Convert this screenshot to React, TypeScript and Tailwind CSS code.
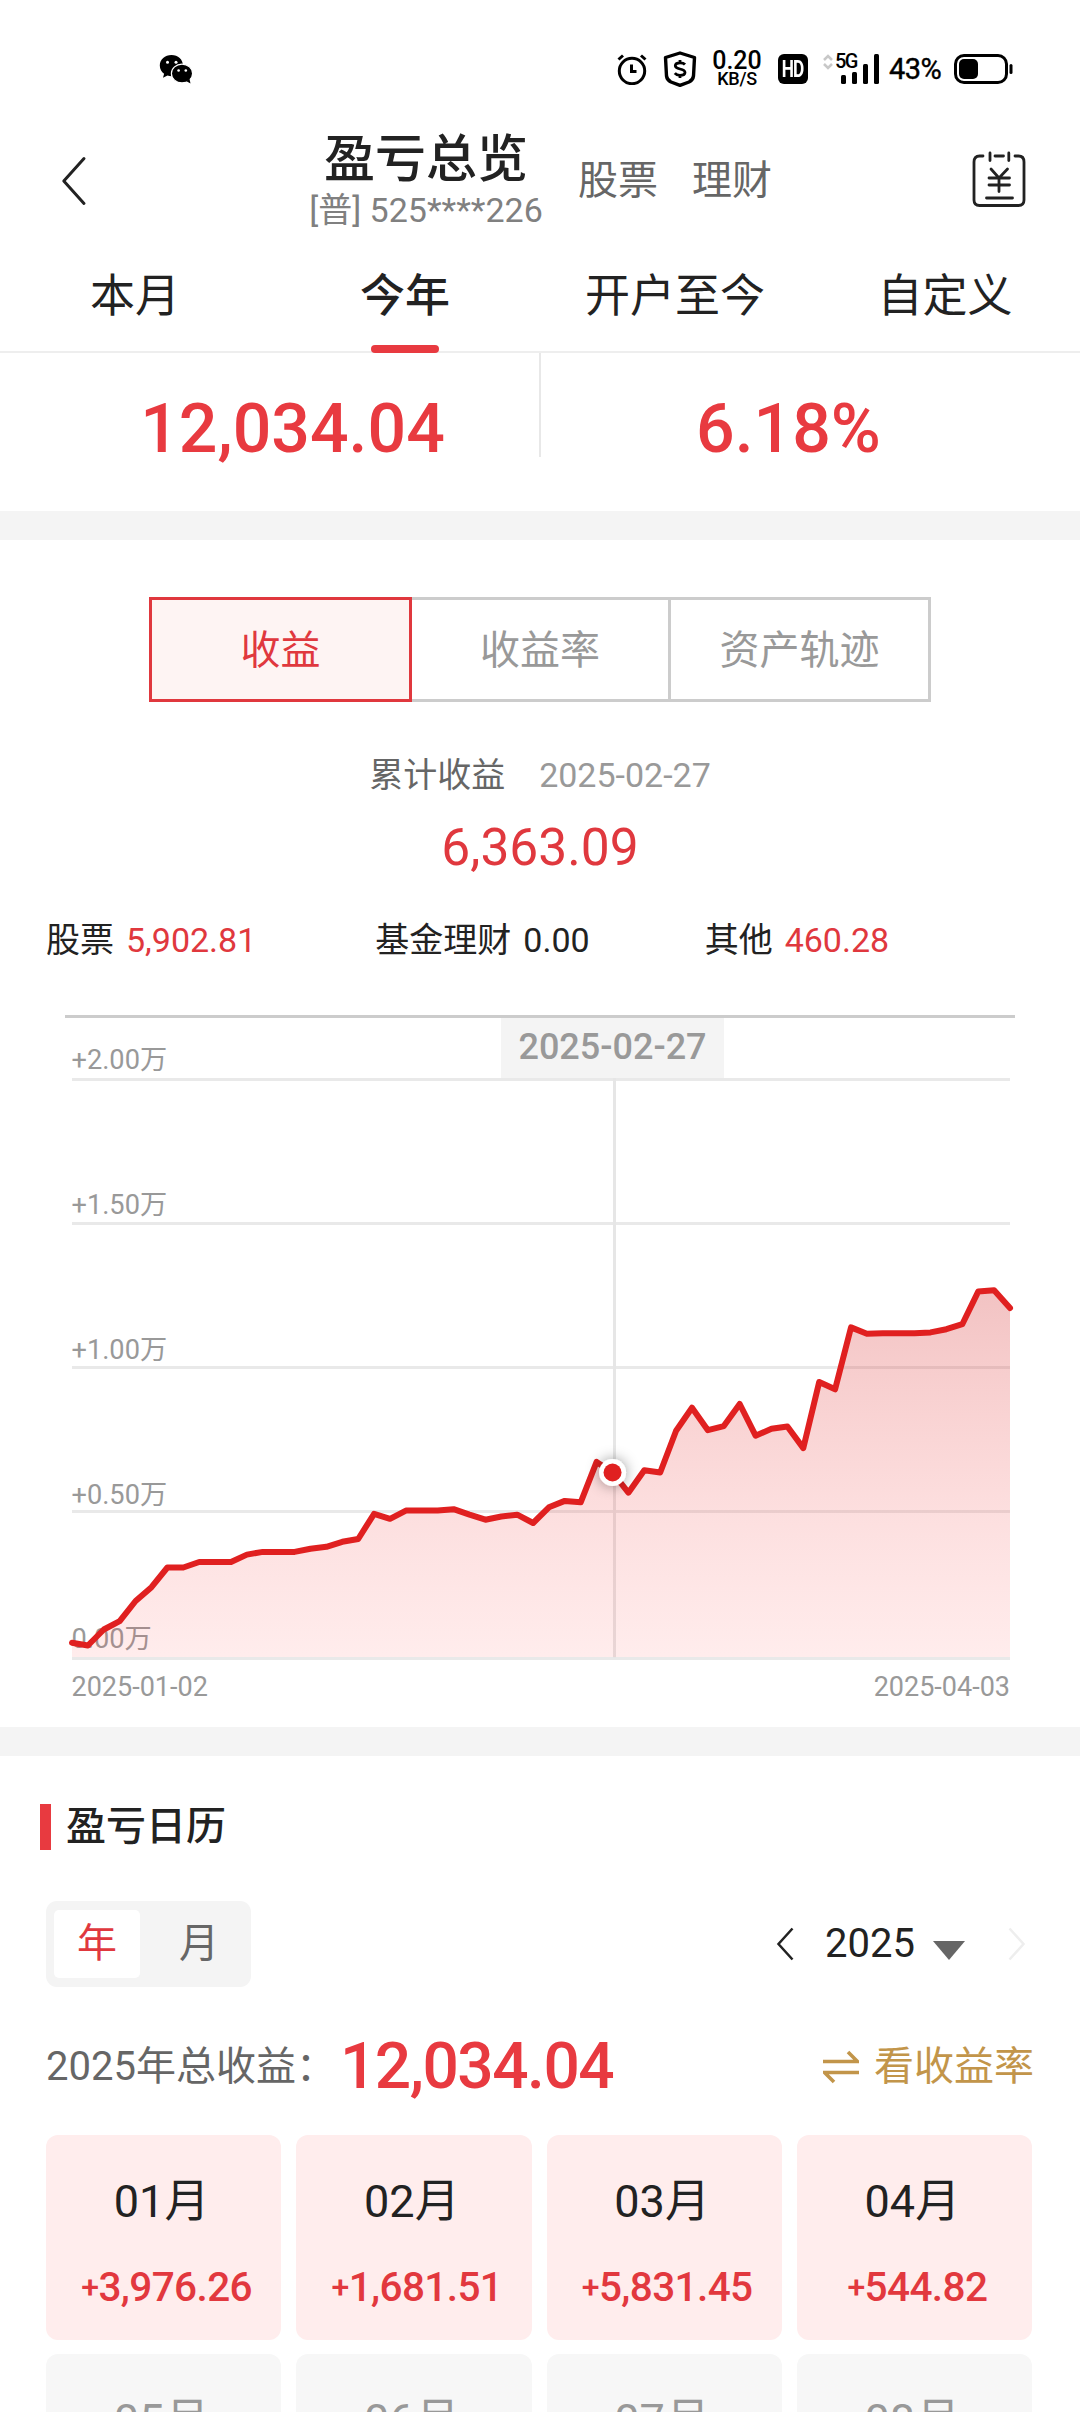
import clsx from "clsx"

const tabs = ["本月", "今年", "开户至今", "自定义"]

const segments = ["收益", "收益率", "资产轨迹"]

const breakdown = [
  { label: "股票", value: "5,902.81", up: true },
  { label: "基金理财", value: "0.00", up: false },
  { label: "其他", value: "460.28", up: true },
]

const months = [
  { name: "01月", value: "+3,976.26" },
  { name: "02月", value: "+1,681.51" },
  { name: "03月", value: "+5,831.45" },
  { name: "04月", value: "+544.82" },
  { name: "05月" },
  { name: "06月" },
  { name: "07月" },
  { name: "08月" },
]

const gridLines = [
  { y: 79.5, label: "+2.00万", labelY: 69 },
  { y: 223.5, label: "+1.50万", labelY: 214 },
  { y: 367.5, label: "+1.00万", labelY: 359 },
  { y: 511.5, label: "+0.50万", labelY: 504 },
  { y: 658.5, label: "0.00万", labelY: 648 },
]

const series = [
  642.8, 645.5, 629.5, 621.2, 601, 587.2, 567.5, 567.5, 562, 562, 562, 554.6, 551.9, 551.9, 551.9, 548.7, 546.8,
  541.8, 539, 513.8, 518.8, 510.6, 510.6, 510.6, 509.2, 514.7, 519.7, 516.5, 514.7, 523, 507.3, 500.9, 502.3, 461.9,
  472.5, 492.7, 470.2, 472.5, 430.7, 407.7, 430.2, 426.1, 404, 435.7, 428.8, 426.5, 448.1, 382, 389.3, 327.4, 333.8,
  333.3, 333.3, 333.3, 332.4, 329.2, 324.2, 291.6, 290.2, 308.1,
]

const CHART_LEFT = 72
const CHART_RIGHT = 1010
const SELECTED = 34

const pointX = (i: number) => CHART_LEFT + (i * (CHART_RIGHT - CHART_LEFT)) / (series.length - 1)
const points = series.map((y, i) => `${pointX(i).toFixed(1)},${y}`).join(" ")

function StatusBar() {
  return (
    <div className="flex h-[118px] items-center pt-5 text-black">
      <svg className="ml-[159px] h-[30px] w-[34px]" viewBox="0 0 34 30">
        <path d="M12.5 1C6 1 .8 5.500 .8 11.500c0 3.500 1.700 6.400 4.300 8.300L4 23.800l4.500-2.200c1.300.4 2.700.6 4 .6 6.500 0 11.500-4.600 11.500-10.600S19 1 12.500 1Z" />
        <ellipse cx="23" cy="19.500" rx="10.600" ry="9.400" stroke="#fff" strokeWidth="1.200" />
        <path d="m27 27 4.500 2.600-1-4.600Z" />
        <g fill="#fff">
          <circle cx="8.500" cy="8.200" r="1.500" />
          <circle cx="17" cy="8.200" r="1.500" />
          <circle cx="19.600" cy="16.500" r="1.300" />
          <circle cx="26.800" cy="16.500" r="1.300" />
        </g>
      </svg>

      <svg className="ml-[424px] h-8 w-[30px]" viewBox="0 0 30 32" fill="none" stroke="#000" strokeWidth="3">
        <circle cx="15" cy="18" r="12.700" />
        <path d="M14.500 11.500V18.500H19.500" />
        <path d="M1.500 6.500 6 2.500M28.500 6.500 24 2.500" />
      </svg>
      <svg className="ml-4 h-9 w-[34px]" viewBox="0 0 34 36" fill="none" stroke="#000" strokeWidth="3.400">
        <path d="M17 2 31.500 6.500 30.500 25Q30 29 26 31L17 34.300 8 31Q4 29 3.500 25L2.500 6.500Z" strokeLinejoin="round" />
        <path d="M22 13.500Q20.500 11.800 17 11.800 12.300 11.800 12.300 14.800 12.300 17 17 18 22 19 22 21.500 22 24.300 17 24.300 13.500 24.300 11.800 22.200M17 9V12M17 24V27" strokeWidth="2.800" />
      </svg>

      <div className="ml-[15px] flex w-[50px] flex-col items-center font-medium">
        <span className="text-[25px] leading-[19px]">0.20</span>
        <span className="text-[18px] leading-[18px] tracking-[-0.3px]">KB/S</span>
      </div>

      <div className="ml-4 flex h-[30px] w-[30px] items-center justify-center rounded-md bg-black text-white">
        <span className="scale-x-75 text-[23px] leading-none font-bold tracking-[-1px]">HD</span>
      </div>

      <div className="relative ml-[15px] h-[30px] w-[57px]">
        <svg className="h-[30px] w-[57px]" viewBox="0 0 57 30">
          <path d="M1 6 5 2 9 6M1 10 5 14 9 10" fill="none" stroke="#c8c8c8" strokeWidth="2.500" />
          <rect x="18" y="21" width="5" height="9" rx="1.500" />
          <rect x="29" y="18" width="5" height="12" rx="1.500" />
          <rect x="40" y="10" width="5" height="20" rx="1.500" />
          <rect x="51" y="0" width="5" height="30" rx="1.500" />
        </svg>
        <span className="absolute top-[-3px] left-[12px] text-[20px] leading-[20px] font-medium tracking-[-1.5px]">5G</span>
      </div>

      <span className="ml-[9px] w-[57px] text-[29px] leading-none tracking-[-0.5px] [-webkit-text-stroke:0.4px_#000]">43%</span>

      <svg className="ml-2 h-[30px] w-[60px]" viewBox="0 0 60 30">
        <rect x="1.500" y="1.500" width="51" height="27" rx="8.500" fill="none" stroke="#000" strokeWidth="3" />
        <rect x="5" y="5" width="19" height="20" rx="5" />
        <rect x="55.500" y="10" width="3" height="10" rx="1.500" />
      </svg>
    </div>
  )
}

function NavBar() {
  return (
    <div className="flex h-[125px] items-center">
      <svg className="ml-[61px] h-[50px] w-[26px]" viewBox="0 0 26 50" fill="none" stroke="#222" strokeWidth="3">
        <path d="M23 2.500 2.800 25 23 47.500" strokeLinecap="round" strokeLinejoin="round" />
      </svg>
      <div className="ml-[221px] flex w-[236px] flex-col items-center whitespace-nowrap">
        <h1 className="h-[58px] text-[51px] leading-[61px] font-medium text-[#222]">盈亏总览</h1>
        <span className="text-[34px] leading-[46px] text-[#808080]">[普] 525****226</span>
      </div>
      <span className="ml-[34px] text-[40px] leading-none text-[#666]">股票</span>
      <span className="ml-[34px] text-[40px] leading-none text-[#666]">理财</span>
      <svg className="mb-[3px] ml-[199px] h-[58px] w-[56px]" viewBox="0 0 56 58" fill="none" stroke="#222" strokeWidth="2.800" strokeLinecap="round">
        <path d="M12 6H8.500Q3 6 3 12V50Q3 55.500 8.500 55.500H47.500Q53 55.500 53 50V12Q53 6 47.500 6H44M24 6H32.500M19 3V10.500M37.800 3V10.500" />
        <path d="M20 19 28 28 36.500 19M18 28H38.500M18 35H38.500M28 28V41.500M15.500 48H41.500" />
      </svg>
    </div>
  )
}

function TabBar() {
  return (
    <div className="grid h-[110px] grid-cols-4 border-b-2 border-[#eee]">
      {tabs.map((tab, i) => (
        <div key={tab} className="-mb-0.5 flex flex-col items-center">
          <span className={clsx("h-[102px] text-[45px] leading-[107px] text-[#222]", i === 1 && "font-medium")}>{tab}</span>
          {i === 1 && <i className="z-10 h-2 w-[68px] rounded-full bg-[#e83a40]" />}
        </div>
      ))}
    </div>
  )
}

function ProfitChart() {
  return (
    <svg className="block h-[727px] w-full" viewBox="0 0 1080 727">
      <defs>
        <linearGradient id="area" gradientUnits="userSpaceOnUse" x1="0" y1="290" x2="0" y2="658">
          <stop offset="0" stopColor="#cf2020" stopOpacity="0.270" />
          <stop offset="0.600" stopColor="#f03434" stopOpacity="0.160" />
          <stop offset="1" stopColor="#ff4444" stopOpacity="0.100" />
        </linearGradient>
        <filter id="glow" x="-100%" y="-100%" width="300%" height="300%">
          <feDropShadow dx="0" dy="0" stdDeviation="7" floodColor="#000" floodOpacity="0.400" />
        </filter>
      </defs>

      <path d="M65 16.500H1015" stroke="#ccc" strokeWidth="3" />
      {gridLines.map((line) => (
        <g key={line.label}>
          <path d={`M${CHART_LEFT} ${line.y}H${CHART_RIGHT}`} stroke="#e9e9e9" strokeWidth="3" />
          <text x="71.500" y={line.labelY} fontSize="27.200" fill="#999">
            {line.label}
          </text>
        </g>
      ))}
      <path d="M614.500 78V658" stroke="#e6e6e6" strokeWidth="3" />

      <rect x="501" y="18" width="223" height="60" fill="#f4f4f4" />
      <text x="612.500" y="59" fontSize="36" fontWeight="500" fill="#999" textAnchor="middle">
        2025-02-27
      </text>

      <polygon points={`${CHART_LEFT},657 ${points} ${CHART_RIGHT},657`} fill="url(#area)" />
      <polyline points={points} fill="none" stroke="#e02020" strokeWidth="6" strokeLinecap="round" strokeLinejoin="round" />
      <circle cx={pointX(SELECTED)} cy={series[SELECTED]} r="13.500" fill="#fff" filter="url(#glow)" />
      <circle cx={pointX(SELECTED)} cy={series[SELECTED]} r="9" fill="#e02020" />

      <g fontSize="27" fill="#999">
        <text x="71.500" y="696">2025-01-02</text>
        <text x="1010" y="696" textAnchor="end">
          2025-04-03
        </text>
      </g>
    </svg>
  )
}

function MonthCard({ name, value }: { name: string; value?: string }) {
  return (
    <div className={clsx("flex h-[205px] flex-col items-center rounded-xl pt-10", value ? "bg-[#ffeded]" : "bg-[#f7f7f7]")}>
      <span className={clsx("-ml-1 text-[45px] leading-[54px]", value ? "text-[#222]" : "text-[#999]")}>{name}</span>
      {value && (
        <span className="mt-[31px] ml-[6px] flex items-center text-[40.5px] leading-[54px] font-medium tracking-[-0.6px] text-[#e2383e]">
          <span className="text-[32px]">{value[0]}</span>
          {value.slice(1)}
        </span>
      )}
    </div>
  )
}

export default function App() {
  return (
    <div className="h-[2412px] w-[1080px] overflow-hidden bg-white font-[Roboto,'Noto_Sans_CJK_SC',sans-serif] text-[#222]">
      <StatusBar />
      <NavBar />
      <TabBar />

      <div className="flex h-[158px] text-[68px] leading-[152px] font-medium text-[#e83a40]">
        <div className="h-[104px] w-[541px] border-r-2 border-[#e8e8e8] pl-[46px] text-center">12,034.04</div>
        <div className="h-[104px] w-[539px] pr-[44px] text-center">6.18%</div>
      </div>

      <div className="h-[29px] bg-[#f4f4f4]" />

      <div className="h-[460px] pt-[57px]">
        <div className="mx-auto flex h-[105px] w-[782px] text-[40px] leading-[101px]">
          {segments.map((label, i) => (
            <div
              key={label}
              className={clsx(
                "border-y-3 text-center",
                i === 0 ? "w-[263px] border-x-3 border-[#e0383e] bg-[#fef4f3] text-[#e0383e]" : "border-r-3 border-[#ccc] text-[#999]",
                i === 1 && "w-[259px]",
                i === 2 && "w-[260px]",
              )}
            >
              {label}
            </div>
          ))}
        </div>

        <div className="mt-[48px] flex justify-center gap-[34px] text-[34px] leading-[50px]">
          <span className="text-[#666]">累计收益</span>
          <span className="text-[#999]">2025-02-27</span>
        </div>
        <div className="mt-[15px] text-center text-[51.5px] leading-[66px] text-[#e0383e]">6,363.09</div>
        <div className="mt-[34px] grid grid-cols-3 px-[46px] text-[34px] leading-[50px]">
          {breakdown.map((item) => (
            <div key={item.label} className="flex gap-3">
              <span>{item.label}</span>
              <span className={item.up ? "text-[#e0383e]" : "text-[#222]"}>{item.value}</span>
            </div>
          ))}
        </div>
      </div>

      <ProfitChart />

      <div className="h-[29px] bg-[#f4f4f4]" />

      <div className="pt-12 pr-12 pl-[46px]">
        <div className="-ml-[6px] flex h-[46px] items-center">
          <i className="h-[46px] w-[11px] bg-[#e83a40]" />
          <h2 className="ml-[15px] text-[40px] leading-[48px] font-medium">盈亏日历</h2>
        </div>

        <div className="mt-[51px] flex h-[86px] items-center">
          <div className="flex h-[86px] w-[205px] rounded-[11px] bg-[#f4f4f4] py-[9px] pl-2 text-[40px] leading-[68px]">
            <span className="h-[68px] w-[86px] rounded-[5px] bg-white text-center text-[#e0383e]">年</span>
            <span className="ml-[16px] w-[86px] text-center text-[#666]">月</span>
          </div>
          <svg className="ml-[525px] h-[34px] w-[18px]" viewBox="0 0 18 34" fill="none" stroke="#222" strokeWidth="2.500">
            <path d="M16.500 1.500 2.500 17 16.500 32.500" />
          </svg>
          <span className="ml-[31px] w-[92px] text-[40px] leading-none">2025</span>
          <svg className="mt-3 ml-[16px] h-[19px] w-8" viewBox="0 0 32 19">
            <path d="M0 0H32L16 19Z" fill="#666" />
          </svg>
          <svg className="ml-[43px] h-[34px] w-[18px]" viewBox="0 0 18 34" fill="none" stroke="#eee" strokeWidth="2.500">
            <path d="M1.500 1.500 15.500 17 1.500 32.500" />
          </svg>
        </div>

        <div className="mt-[45px] flex h-[70px] items-center text-[40px] leading-[70px] whitespace-nowrap">
          <span className="text-[#666]">2025年总收益：</span>
          <span className="ml-1 text-[64px] font-medium tracking-[-1.5px] text-[#e83a40]">12,034.04</span>
          <svg className="ml-auto h-[34px] w-9" viewBox="0 0 36 34" fill="none" stroke="#c2954a" strokeWidth="3.600">
            <path d="M0 11.500H34.500L25 2M36 22.500H1.500L11 32" />
          </svg>
          <span className="-mr-0.5 ml-[15px] text-[#c2954a]">看收益率</span>
        </div>

        <div className="mt-[33px] grid grid-cols-4 gap-x-[15px] gap-y-[14px]">
          {months.map((month) => (
            <MonthCard key={month.name} {...month} />
          ))}
        </div>
      </div>
    </div>
  )
}
